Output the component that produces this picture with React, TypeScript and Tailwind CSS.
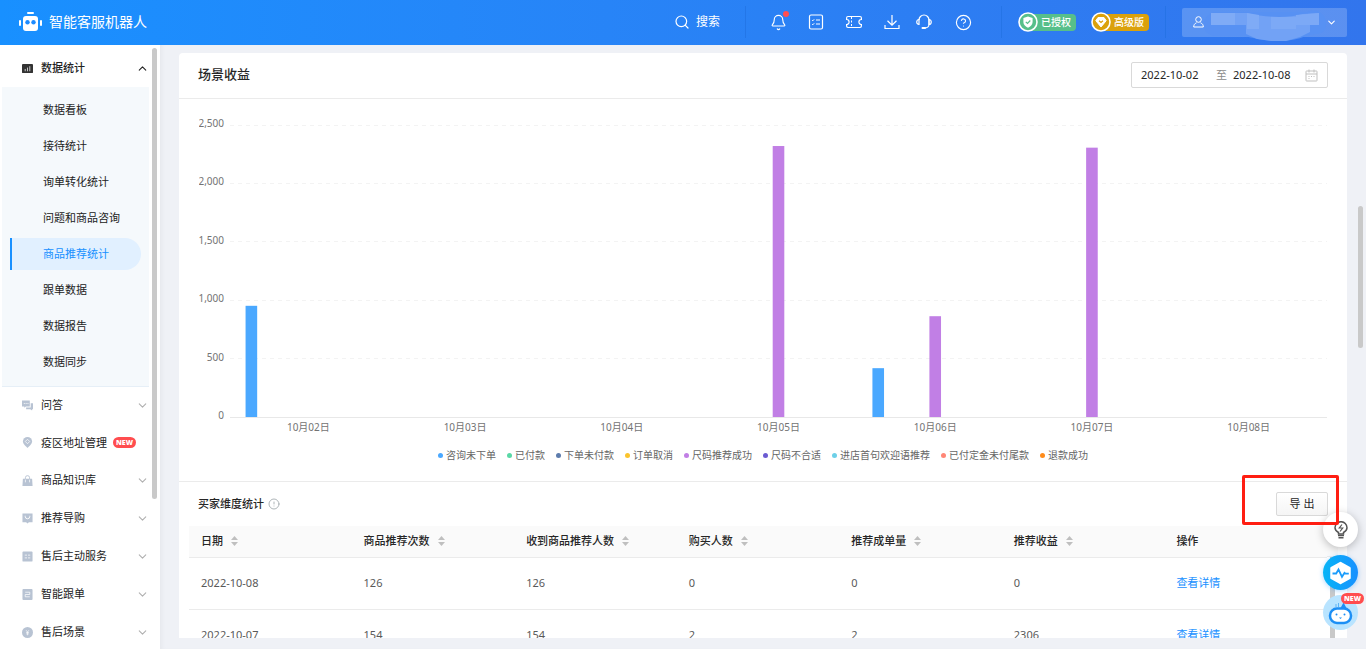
import React from "react";
import clsx from "clsx";
import {
  Bell,
  ChevronDown,
  ChevronUp,
  CircleAlert,
  CircleHelp,
  Search,
} from "lucide-react";

interface MenuItem {
  name: string;
  icon: React.ReactNode;
  isNew?: boolean;
}

interface Bar {
  day: number;
  series: number;
  value: number;
}

interface BuyerRow {
  date: string;
  values: string[];
}

const subMenu: string[] = [
  "数据看板",
  "接待统计",
  "询单转化统计",
  "问题和商品咨询",
  "商品推荐统计",
  "跟单数据",
  "数据报告",
  "数据同步",
];

const activeItem = "商品推荐统计";

const menu: MenuItem[] = [
  {
    name: "问答",
    icon: (
      <>
        <path d="M1 .5h7.500v6.500H4.200L2.500 8.500V7H0V.5z" fill="currentColor" />
        <path d="M9.500 3.500H12v6.500h-1v1.500L9 10H4.500V8.200h5z" fill="currentColor" />
        <path d="M2 3.800h1M4 3.800h1M6 3.800h1" stroke="#fff" />
      </>
    ),
  },
  {
    name: "疫区地址管理",
    isNew: true,
    icon: (
      <>
        <path
          d="M6 0a5 5 0 0 1 5 5C11 8 6 12 6 12S1 8 1 5A5 5 0 0 1 6 0z"
          fill="currentColor"
        />
        <path d="M6 2.500l2.400 2.400L6 7.300 3.600 4.900z" fill="none" stroke="#fff" strokeWidth=".8" />
      </>
    ),
  },
  {
    name: "商品知识库",
    icon: (
      <>
        <path d="M1 4h10l.5 8H.5z" fill="currentColor" />
        <path d="M3.700 7V3a2.300 2.300 0 0 1 4.600 0v4" fill="none" stroke="currentColor" />
        <path d="M3.700 5v3M8.300 5v3" stroke="#fff" strokeWidth=".8" />
      </>
    ),
  },
  {
    name: "推荐导购",
    icon: (
      <>
        <path d="M.5.500h11v9.500H7.500L6 11.500 4.500 10h-4z" fill="currentColor" />
        <path d="M3.500 3v.8a2.500 2.500 0 0 0 5 0V3" fill="none" stroke="#fff" />
      </>
    ),
  },
  {
    name: "售后主动服务",
    icon: (
      <>
        <rect x=".5" y=".5" width="11" height="11" rx="1" fill="currentColor" />
        <path d="M3 4.500h2.500M6.500 4.500H9M3 7.500h2.500M6.500 7.500H9" stroke="#fff" strokeWidth=".8" />
      </>
    ),
  },
  {
    name: "智能跟单",
    icon: (
      <>
        <rect x=".5" y="0" width="11" height="12" rx="1" fill="currentColor" />
        <path d="M3.500 3.500h5V6h-5v2.500h5" fill="none" stroke="#fff" strokeWidth=".8" />
      </>
    ),
  },
  {
    name: "售后场景",
    icon: (
      <>
        <circle cx="6" cy="6" r="6" fill="currentColor" />
        <path d="M4.500 3.500L6 5.500l1.500-2M6 5.500V9M4.500 6h3M4.500 7.500h3" fill="none" stroke="#fff" strokeWidth=".7" />
      </>
    ),
  },
];

const legend = [
  { name: "咨询未下单", color: "#4aa8ff" },
  { name: "已付款", color: "#5ad8a6" },
  { name: "下单未付款", color: "#5d7cad" },
  { name: "订单取消", color: "#fbc42d" },
  { name: "尺码推荐成功", color: "#c17fe5" },
  { name: "尺码不合适", color: "#6b5bd2" },
  { name: "进店首句欢迎语推荐", color: "#6dd0e8" },
  { name: "已付定金未付尾款", color: "#ff8676" },
  { name: "退款成功", color: "#ff8b1a" },
];

const days = [
  "10月02日",
  "10月03日",
  "10月04日",
  "10月05日",
  "10月06日",
  "10月07日",
  "10月08日",
];

const bars: Bar[] = [
  { day: 0, series: 0, value: 952 },
  { day: 3, series: 4, value: 2320 },
  { day: 4, series: 0, value: 418 },
  { day: 4, series: 4, value: 863 },
  { day: 5, series: 4, value: 2306 },
];

const ticks = ["2,500", "2,000", "1,500", "1,000", "500", "0"];

const columns = [
  "日期",
  "商品推荐次数",
  "收到商品推荐人数",
  "购买人数",
  "推荐成单量",
  "推荐收益",
  "操作",
];

const rows: BuyerRow[] = [
  { date: "2022-10-08", values: ["126", "126", "0", "0", "0"] },
  { date: "2022-10-07", values: ["154", "154", "2", "2", "2306"] },
];

// Chart geometry: 7 days across, 2500 units over 292px
const plotHeight = 292;
const band = 100 / 7;
const barStep = band / 11;

function Divider() {
  return <span className="h-8 w-px bg-[#1f6fe0]/60" />;
}

function IconButton({ label, children }: { label: string; children: React.ReactNode }) {
  return (
    <button type="button" aria-label={label} className="relative flex size-4 items-center justify-center">
      {children}
    </button>
  );
}

function NewTag() {
  return (
    <span className="flex h-[11px] w-[23px] items-center justify-center rounded-full bg-[#ff4d4f] font-['Open_Sans'] text-[7px] leading-none font-extrabold text-white">
      NEW
    </span>
  );
}

function TopBar() {
  return (
    <header className="flex h-[45px] shrink-0 items-center justify-between bg-linear-to-r from-[#1890ff] to-[#3275ed] pr-[19px] pb-px pl-[19px] text-white">
      <div className="flex items-center gap-[7px]">
        <svg width="23" height="20" viewBox="0 0 23 20" fill="#fff" aria-hidden="true">
          <rect x="8" y="0" width="7" height="2" rx="1" />
          <rect x="4" y="4" width="15" height="15" rx="3" />
          <rect x="0" y="8" width="2" height="6" rx="1" />
          <rect x="21" y="8" width="2" height="6" rx="1" />
          <circle cx="8.500" cy="10.300" r="2.200" fill="#1d8bff" />
          <circle cx="14.500" cy="10.300" r="2.200" fill="#1d8bff" />
        </svg>
        <h1 className="text-[14px] leading-5">智能客服机器人</h1>
      </div>

      <div className="flex items-center">
        <button type="button" className="mr-[25px] flex items-center gap-1.5 text-[12px] leading-5">
          <Search size={16} strokeWidth={1.800} />
          搜索
        </button>
        <Divider />
        <div className="ml-6 flex items-center gap-[22px]">
          <IconButton label="消息">
            <Bell size={17} strokeWidth={1.600} className="shrink-0" />
            <span className="absolute -top-[3px] -right-[3px] size-1.5 rounded-full bg-[#ff4d4f]" />
          </IconButton>
          <IconButton label="任务">
            <svg width="16" height="16" viewBox="0 0 16 16" fill="none" stroke="#fff">
              <rect x="1.500" y="1" width="13" height="14" rx="1.500" strokeWidth="1.200" />
              <path d="M4 6l.8.8L6.200 5.300M4 10l.8.8 1.400-1.500M8 6h4M8 10h4" />
            </svg>
          </IconButton>
          <IconButton label="优惠券">
            <svg width="16" height="16" viewBox="0 0 16 16" fill="none" stroke="#fff">
              <path
                d="M2 2.500h12q1.400 0 1.400 1.400V5.500a2.500 2.500 0 0 0 0 5v1.600q0 1.400-1.400 1.400H2Q.6 13.500.6 12.100v-1.600a2.500 2.500 0 0 0 0-5V3.900Q.6 2.500 2 2.500z"
                strokeWidth="1.200"
              />
              <path d="M5.500 3v10" strokeDasharray="2 1.500" />
            </svg>
          </IconButton>
          <IconButton label="下载">
            <svg width="16" height="16" viewBox="0 0 16 16" fill="none" stroke="#fff" strokeWidth="1.200">
              <path d="M8 1v10M3.500 6.800L8 11.200l4.500-4.400M1 11v3.500h14V11" />
            </svg>
          </IconButton>
        </div>
        <div className="ml-4 flex items-center gap-[23px]">
          <IconButton label="客服">
            <svg width="16" height="16" viewBox="0 0 16 16" fill="none" stroke="#fff" strokeWidth="1.200">
              <path d="M3 6a5 5 0 0 1 10 0v4.500c0 2-2 3.500-4.500 3.500" />
              <path d="M3 5.500v5c-3 0-3-5 0-5zM13 5.500v5c3 0 3-5 0-5z" />
              <path d="M6.500 14h2.500" strokeWidth="2" strokeLinecap="round" />
            </svg>
          </IconButton>
          <IconButton label="帮助">
            <CircleHelp size={17} strokeWidth={1.600} className="shrink-0" />
          </IconButton>
        </div>
        <div className="mr-4 ml-[30px] flex">
          <Divider />
        </div>
        <div className="flex items-center gap-[15px]">
          <span className="flex items-center">
            <svg width="20" height="20" viewBox="0 0 20 20" className="relative" aria-hidden="true">
              <circle cx="10" cy="10" r="9" fill="#57bf8a" stroke="#fff" strokeWidth="1.600" />
              <path d="M10 4.500l4.600 1.600v4c0 2.800-2.200 4.600-4.600 5.600-2.400-1-4.600-2.800-4.600-5.600v-4z" fill="#fff" />
              <path d="M7.800 9.800l1.700 1.700 2.800-3" fill="none" stroke="#57bf8a" strokeWidth="1.200" />
            </svg>
            <span className="-ml-2 flex h-[17px] items-center rounded-r-sm bg-[#57bf8a] pr-[5px] pl-[11px] text-[10px] leading-4 font-medium">
              已授权
            </span>
          </span>
          <span className="flex items-center">
            <svg width="20" height="20" viewBox="0 0 20 20" className="relative" aria-hidden="true">
              <circle cx="10" cy="10" r="9" fill="#dba10b" stroke="#fff" strokeWidth="1.600" />
              <path d="M7 5.500h6l2.200 3.200L10 15 4.800 8.700z" fill="#fff" stroke="#fff" strokeLinejoin="round" />
              <path d="M8 8.700l2 1.700 2-1.700" fill="none" stroke="#dba10b" strokeWidth="1.200" />
            </svg>
            <span className="-ml-2 flex h-[17px] items-center rounded-r-sm bg-[#dba10b] pr-[5px] pl-[11px] text-[10px] leading-4 font-medium">
              高级版
            </span>
          </span>
        </div>
        <div className="mx-4 flex">
          <Divider />
        </div>
        <button
          type="button"
          aria-label="账号"
          className="flex h-[29px] w-[165px] items-center rounded-xs bg-white/20 pr-[11px] pl-[11px]"
        >
          <svg width="11" height="12" viewBox="0 0 11 12" fill="none" stroke="#fff" className="shrink-0">
            <circle cx="5.500" cy="3.500" r="2.800" />
            <path d="M3.500 6.800C1.600 7.500.7 9 .7 11h9.600c0-2-.9-3.500-2.800-4.200" />
          </svg>
          <svg width="122" height="36" viewBox="0 0 122 36" className="-my-1 shrink-0 translate-y-[2px]" aria-hidden="true">
            <path d="M0 19a12 13 0 0 1 12-13h91c8-4 19 0 19 12s-10 9-20 12c-18 8-42 5-62 0H10C3 28 0 25 0 19z" fill="#5791f3" />
            <path d="M7 7h36c20 5 42 5 56 1l16-1v12h-9v7l-10 5-14 4H67l-14-2-11-5V19H7z" fill="#72a2f5" />
            <path d="M7 7h24v12H7zM43 7l12 2v14H43z" fill="#7fabf6" />
            <path d="M67 11h25v12H67zM92 9l23-2v12H92z" fill="#7ca9f6" />
          </svg>
          <ChevronDown size={11} strokeWidth={2.500} className="ml-auto shrink-0" />
        </button>
      </div>
    </header>
  );
}

function Sidebar() {
  return (
    <aside className="relative w-40 shrink-0 overflow-hidden bg-white text-[11px] leading-4 text-[#222]">
      <nav className="mr-[11px] ml-0.5">
        <button type="button" className="flex h-[42px] w-full items-center pt-1 pl-5 font-medium">
          <svg width="11" height="11" viewBox="0 0 12 12" className="mr-2 shrink-0">
            <rect x="0" y="1" width="12" height="10" rx="1" fill="#333" />
            <path d="M3.500 9V6.500M6 9V5M8.500 9V3.500" stroke="#fff" strokeWidth=".8" />
          </svg>
          数据统计
          <ChevronUp size={13} strokeWidth={2} className="ml-auto" />
        </button>
        <ul className="flex flex-col gap-1 border-b border-[#e6eff7] bg-[#f5f9fc] pt-[7px] pr-2 pb-2 pl-2">
          {subMenu.map((name) => (
            <li key={name}>
              <a
                href="#"
                className={clsx(
                  "flex h-8 items-center rounded-r-full border-l-2 pl-[31px]",
                  name === activeItem
                    ? "border-[#1890ff] bg-[#e1f0ff] text-[#1890ff]"
                    : "border-transparent"
                )}
              >
                {name}
              </a>
            </li>
          ))}
        </ul>
        {menu.map((item) => (
          <button
            key={item.name}
            type="button"
            className={clsx(
              "flex w-full items-center pb-0.5 pl-5",
              item.isNew ? "h-[37px]" : "h-[38px]"
            )}
          >
            <svg width="11" height="11" viewBox="0 0 12 12" className="mr-2 shrink-0 text-[#b8c3d3]">
              {item.icon}
            </svg>
            {item.name}
            {item.isNew ? (
              <span className="ml-1.5">
                <NewTag />
              </span>
            ) : (
              <ChevronDown size={13} strokeWidth={2} className="ml-auto text-[#b0b0b0]" />
            )}
          </button>
        ))}
      </nav>
      {/* Scrollbar thumb */}
      <span className="absolute top-[3px] right-[3px] h-[451px] w-[5px] rounded-full bg-[#c9c9c9]" />
    </aside>
  );
}

function ProfitChart() {
  return (
    <div className="flex px-5 pt-[18px] text-[10px]">
      <svg width="31" height="320" className="shrink-0" fill="#737373">
        {ticks.map((tick, index) => (
          <text key={tick} x="25" y={10 + (index * plotHeight) / 5} textAnchor="end">
            {tick}
          </text>
        ))}
      </svg>
      <svg height="320" className="min-w-0 flex-1" role="img" aria-label="场景收益柱状图">
        {ticks.map((tick, index) => (
          <line
            key={tick}
            x1="0"
            x2="100%"
            y1={8 + (index * plotHeight) / 5}
            y2={8 + (index * plotHeight) / 5}
            stroke={tick === "0" ? "#e8e8e8" : "#f3f3f3"}
            strokeDasharray={tick === "0" ? undefined : "4 4"}
            shapeRendering="crispEdges"
          />
        ))}
        {bars.map((bar) => {
          const height = (bar.value / 2500) * plotHeight;
          const center = (bar.day + 0.5) * band + (bar.series - 4) * barStep;
          return (
            <rect
              key={`${bar.day}-${bar.series}`}
              x={`${center - band / 27}%`}
              y={8 + plotHeight - height}
              width={`${band / 13.5}%`}
              height={height}
              fill={legend[bar.series].color}
            />
          );
        })}
        {days.map((day, index) => (
          <text key={day} x={`${(index + 0.5) * band}%`} y="314" textAnchor="middle" fill="#737373">
            {day}
          </text>
        ))}
      </svg>
    </div>
  );
}

function SortIcon() {
  return (
    <svg width="7" height="10" viewBox="0 0 7 10" fill="#bfbfbf" aria-hidden="true">
      <path d="M3.500 0L7 4H0zM3.500 10L7 6H0z" />
    </svg>
  );
}

function BuyerTable() {
  return (
    <div className="mr-[9px] ml-2.5 flex">
      <table className="w-full flex-1 table-fixed text-left text-[11px] leading-4">
        <thead>
          <tr className="h-[31px] border-b border-[#ebebeb] bg-[#fafafa] text-[#262626]">
            {columns.map((column) => (
              <th key={column} className="px-3 py-0 font-medium">
                {column === "操作" ? (
                  column
                ) : (
                  <button type="button" className="flex items-center gap-2">
                    {column}
                    <SortIcon />
                  </button>
                )}
              </th>
            ))}
          </tr>
        </thead>
        <tbody>
          {rows.map((row) => (
            <tr key={row.date} className="h-[52px] border-b border-[#ebebeb] text-[#595959]">
              <td className="px-3 py-0">{row.date}</td>
              {row.values.map((value, index) => (
                <td key={index} className="px-3 py-0">
                  {value}
                </td>
              ))}
              <td className="px-3 py-0">
                <a href="#" className="text-[#1890ff]">
                  查看详情
                </a>
              </td>
            </tr>
          ))}
        </tbody>
      </table>
      <div className="flex w-[11px] shrink-0 flex-col">
        <span className="h-[31px] border-b border-[#ebebeb] bg-[#fafafa]" />
        <span className="ml-[3px] w-[5px] flex-1 bg-[#c9c9c9]" />
      </div>
    </div>
  );
}

function FloatingTools() {
  return (
    <div className="absolute right-2 bottom-[19px] z-10 flex flex-col items-center gap-2">
      <button
        type="button"
        aria-label="建议"
        className="flex size-[35px] items-center justify-center rounded-full bg-white shadow-[0_2px_8px_rgba(0,0,0,0.25)]"
      >
        <svg width="14" height="18" viewBox="0 0 14 18" fill="none" stroke="#555" strokeWidth="1.500">
          <path d="M4.500 13v-1.500C2.500 10.300 1 8.800 1 6.700a6 6 0 0 1 12 0c0 2.100-1.500 3.600-3.500 4.800V13z" />
          <path d="M4 14.500h6M4.500 16.700h5" />
          <path d="M8 3.500L5.300 7h3.400L6 10.500" strokeWidth="1.200" />
        </svg>
      </button>
      <button
        type="button"
        aria-label="诊断"
        className="flex size-[35px] items-center justify-center rounded-full bg-linear-to-r from-[#08b4f6] to-[#1890ff] shadow-[0_1px_5px_rgba(24,144,255,0.35)]"
      >
        <svg width="23" height="24" viewBox="0 0 23 24">
          <path d="M11.500 2L20.500 7v10l-9 5-9-5V7z" fill="#fff" stroke="#fff" strokeWidth="2.500" strokeLinejoin="round" />
          <path d="M3.500 12.500h3.700l2.300-4 3.500 7.300 2.500-4 1 .9h3.300" fill="none" stroke="#1a9cfb" strokeWidth="1.800" />
        </svg>
      </button>
      <button
        type="button"
        aria-label="智能助手"
        className="relative -mt-[3px] flex size-[35px] items-center justify-center rounded-full bg-[#b9e4ff]"
      >
        <svg width="27" height="27" viewBox="0 0 27 27">
          <path d="M9 5v3M11.500 4v4" stroke="#5fb4f5" />
          <path d="M13 10l3.500-6.500L20 10z" fill="#1c8ff5" />
          <rect x="3" y="9.500" width="21" height="14.500" rx="7" fill="#fff" stroke="#1c8ff5" strokeWidth="2.500" />
          <circle cx="9.500" cy="15.500" r="1" fill="#1c8ff5" />
          <circle cx="17.500" cy="15.500" r="1" fill="#1c8ff5" />
          <path d="M12 18.500h3l-1.500 1.500z" fill="#1c8ff5" />
        </svg>
        <span className="absolute -top-0.5 -right-1.5">
          <NewTag />
        </span>
      </button>
    </div>
  );
}

export default function App() {
  return (
    <div className="flex h-screen flex-col overflow-hidden bg-[#eff1f6] font-['Noto_Sans','Noto_Sans_CJK_SC',sans-serif]">
      <TopBar />
      <div className="relative flex min-h-0 flex-1">
        <Sidebar />
        <main className="min-w-0 flex-1 pt-2 pr-[19px] pb-[11px] pl-[19px] shadow-[inset_4px_0_4px_-2px_rgba(0,0,0,0.04)]">
          <div className="h-full rounded-t-sm bg-white">
            <section>
              <div className="flex h-[46px] items-center justify-between border-b border-[#ebebeb] pr-[19px] pb-px pl-[19px]">
                <h2 className="pb-0.5 text-[13px] leading-5 font-medium text-[#262626]">场景收益</h2>
                <div className="flex h-[26px] items-center rounded-xs border border-[#d9d9d9] pr-[9px] pl-[9px] text-[11px] leading-4 text-[#262626]">
                  <input aria-label="开始日期" defaultValue="2022-10-02" className="w-[75px] outline-none" />
                  <span className="mr-1.5 text-[#8c8c8c]">至</span>
                  <input aria-label="结束日期" defaultValue="2022-10-08" className="w-[72px] outline-none" />
                  <svg width="13" height="13" viewBox="0 0 13 13" fill="none" stroke="#bfbfbf" aria-hidden="true">
                    <rect x="1" y="2" width="11" height="10" rx=".5" />
                    <path d="M1 5h11M4 .5v3M9 .5v3M3.500 7.500h1M6 7.500h1M8.500 7.500h1M3.500 9.500h1" />
                  </svg>
                </div>
              </div>
              <ProfitChart />
              <ul className="flex h-[45px] items-center justify-center gap-[11px] border-b border-[#ebebeb] pb-2 text-[10px] leading-4 text-[#666]">
                {legend.map((item) => (
                  <li key={item.name} className="flex items-center gap-[3px]">
                    <span className="size-[5px] rounded-full" style={{ backgroundColor: item.color }} />
                    {item.name}
                  </li>
                ))}
              </ul>
            </section>

            <section className="relative">
              <div className="flex h-11 items-center justify-between pr-[19px] pl-[19px]">
                <h3 className="flex items-center gap-1 text-[11px] leading-4 font-medium text-[#262626]">
                  买家维度统计
                  <CircleAlert size={12} strokeWidth={1.800} className="text-[#a5adb0]" />
                </h3>
                <button
                  type="button"
                  className="h-6 w-[52px] rounded-xs border border-[#d9d9d9] bg-linear-to-b from-white to-[#f5f5f5] text-[11px] leading-4 text-[#262626]"
                >
                  导 出
                </button>
              </div>
              {/* Export highlight */}
              <div className="pointer-events-none absolute -top-[7px] right-2 z-20 h-[50px] w-[97px] rounded-xs border-3 border-[#ff1e12]" />
              <div className="h-28 overflow-hidden">
                <BuyerTable />
              </div>
            </section>
          </div>
        </main>
        <FloatingTools />
        {/* Page scrollbar thumb */}
        <span className="absolute top-[161px] right-[3px] h-[142px] w-[5px] rounded-full bg-[#c9c9c9]" />
      </div>
    </div>
  );
}
